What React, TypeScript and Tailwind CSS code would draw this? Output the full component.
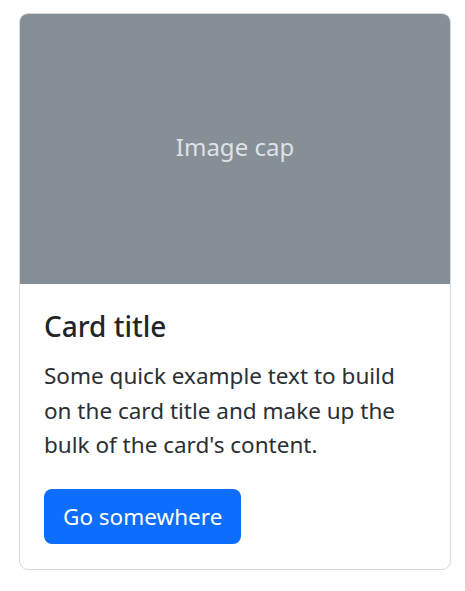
export default function App() {
  return (
    <div className="min-h-screen bg-white pt-[13px] pl-[19px]" style={{ fontFamily: '"Noto Sans", "Open Sans", sans-serif' }}>
      <div className="w-[432px] overflow-hidden rounded-[9px] border border-[#d6d8da] bg-white">
        {/* Image cap placeholder */}
        <div className="flex h-[270px] items-center justify-center bg-[#868e96] pb-[4px] text-[24px] text-[#dee2e6]">
          Image cap
        </div>

        {/* Body */}
        <div className="px-[24px] pt-[25px] pb-[25px]">
          <h5 className="text-[28px] font-medium leading-[35px] text-[#212529]">Card title</h5>
          <p className="mt-[15px] text-[22.5px] leading-[34.5px] text-[#2b2f33]">
            Some quick example text to build on the card title and make up the bulk of the card's content.
          </p>
          <button className="mt-[26px] flex h-[55px] items-center rounded-[8px] bg-[#0d6efd] px-[19px] pt-[2px] text-[22.5px] text-white">
            Go somewhere
          </button>
        </div>
      </div>
    </div>
  );
}
